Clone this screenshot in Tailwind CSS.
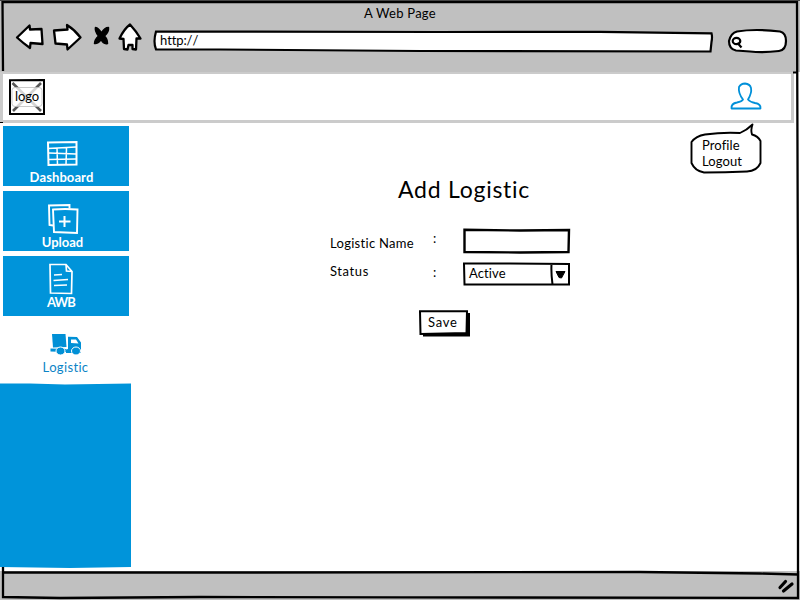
<!DOCTYPE html>
<html lang="en">
<head>
<meta charset="utf-8">
<title>A Web Page</title>
<script src="https://cdn.jsdelivr.net/npm/@tailwindcss/browser@4"></script>
</head>
<body class="bg-white">
<div class="relative flex h-[600px] w-[800px] flex-col overflow-hidden bg-white font-['Lato',sans-serif] text-[13px] leading-4 text-black">

  <!-- Browser chrome -->
  <header class="flex h-[72px] shrink-0 flex-col bg-[#c0c0c0]">
    <div class="flex h-[21px] items-end justify-center"><span class="tracking-[0.25px]">A Web Page</span></div>
    <div class="mt-px flex h-[34px] items-start pl-[14px]">
      <svg class="h-[32px] w-[130px] shrink-0" viewBox="14 22 130 32" fill="#fff" stroke="#000" stroke-width="2.300" stroke-linejoin="round">
        <path d="M17 37.500 L29.500 25.500 L30 29.500 L41.500 29 L42.500 44 L30.500 43 L30 48 Q23 43 17 37.500Z"/>
        <path d="M54 30.500 L67.500 29.500 L67 25 Q75 30 80.500 37.500 L67.500 49.500 L67 44.500 L55.500 43.500Z"/>
        <path d="M95.500 27.500 Q98.500 28 101.500 33 Q104.500 27.500 108.500 27.500 Q109 32 104.500 36 Q107.500 39 107.500 43.500 Q103.500 44.500 101 39.500 Q98 44 94.500 43.500 Q94.500 39.500 98.500 36 Q94.500 31 95.500 27.500Z" fill="#000" stroke-width="1.500"/>
        <path d="M130 24.500 Q136 31 140.500 38.500 L136.500 38.500 L136 49.500 L132.500 49 L132.500 45 L128.500 45 L127.500 49.500 L124 49 L123.500 39 L119.500 38.500 Q124 29 130 24.500Z"/>
      </svg>
      <div class="relative ml-[8px] mt-[7px] h-[25px] w-[564px] shrink-0">
        <svg class="absolute inset-0" width="564" height="25" viewBox="152 29 564 25" fill="#fff" stroke="#000" stroke-width="2.200"><path d="M156 31.500 L440 32 L600 31.800 L711.500 33.300 Q712.500 37 711.500 42 L710.500 51.500 L420 51 L220 49.500 L156 49.300 Q153 42 156 31.500Z"/></svg>
        <span class="relative ml-[8px] mt-[3px] block tracking-[-0.1px] [font-kerning:none]">http://</span>
      </div>
      <svg class="ml-[8px] mt-[5px] h-[27px] w-[66px] shrink-0" viewBox="724 27 66 27" fill="#fff" stroke="#000" stroke-width="2.200">
        <path d="M737 31.500 Q755 28.500 780 31.500 Q786 33 786 41 Q786 50 779 51 Q763 53 750 51.500 L736 50.500 Q729 49 729 41 Q731 33 737 31.500Z"/>
        <ellipse cx="736.500" cy="41" rx="3.800" ry="3.200"/><path d="M737.500 43 L741.500 47.500"/>
      </svg>
    </div>
  </header>

  <!-- Application bar -->
  <div class="mr-[6px] flex h-[51px] shrink-0 items-start justify-between border-b-[3px] border-l-[3px] border-r-[3px] border-t-2 border-[#cbcbcb] bg-white">
    <div class="relative ml-[6px] mt-[5px] flex h-[36px] w-[36px] items-center justify-center">
      <svg class="absolute inset-0" viewBox="9 79 36 36" width="36" height="36">
        <path d="M10 80.200 L44 80 L44 114 L10 114Z" fill="#fff" stroke="#000" stroke-width="2"/>
        <path d="M12.500 83 L41 111 M41 83 L13 111" stroke="#555" stroke-width="2.600"/>
        <rect x="12" y="87.500" width="30" height="19" rx="3" fill="#fff" fill-opacity=".75" stroke="#bbb" stroke-width=".8"/>
      </svg>
      <span class="relative -top-px tracking-[-0.1px]">logo</span>
    </div>
    <svg class="mr-[29px] mt-[8px] h-[29px] w-[32px]" viewBox="730 82 32 29" fill="none" stroke="#0090d9" stroke-width="1.800" stroke-linejoin="round"><path d="M731.500 108.500 Q731 103.500 737 102.500 Q742 101.500 743 99.500 Q738 93 739 87 Q741 83.500 745 83.500 Q750 84 751 88 Q752 93 748 99.500 Q750 102 755 103 Q761 104 760.500 108.500Z"/></svg>
  </div>

  <!-- Page body -->
  <div class="flex h-[448px] shrink-0">
    <nav class="flex w-[131px] shrink-0 flex-col text-center font-bold text-white">
      <a class="ml-[3px] mt-[3px] flex h-[60px] w-[126px] flex-col items-center bg-[#0094da]">
        <svg class="mr-[8px] mt-[14px] h-[28px] w-[32px] shrink-0" viewBox="46 140 32 28" fill="none" stroke="#fff" stroke-width="1.500"><path d="M48 142.500 L76.500 142 L76.500 164.500 L48.500 165Z" stroke-width="2"/><path d="M48 148.500 L76 147 M49 153 L76 154 M49 159.500 L76 159 M57 148 L57.500 165 M66.500 148 L66 165"/></svg>
        <span class="mr-[9px] mt-[1px] tracking-[0.1px]">Dashboard</span>
      </a>
      <a class="ml-[3px] mt-[5px] flex h-[60px] w-[126px] flex-col items-center bg-[#0094da]">
        <svg class="mr-[6px] mt-[12px] h-[32px] w-[32px] shrink-0" viewBox="47 203 32 32" fill="none" stroke="#fff" stroke-width="1.900"><path d="M69.500 208.500 L69.500 205 L49 205.500 L49.500 225 L53 225.500"/><path d="M53 209.500 Q65 208.500 77.500 209.500 L77 233 Q65 232.500 54 232Z"/><path d="M64.500 216 L64.500 227 M59 221.500 L70.500 221.500" stroke-width="2"/></svg>
        <span class="mr-[7px] -mt-px">Upload</span>
      </a>
      <a class="ml-[3px] mt-[5px] flex h-[60px] w-[126px] flex-col items-center bg-[#0094da]">
        <svg class="mr-[10px] mt-[6px] h-[33px] w-[26px] shrink-0" viewBox="48 262 26 33" fill="none" stroke="#fff" stroke-width="1.700"><path d="M50 264.500 L66 264.500 L72 271.500 L71.500 293.500 L50.500 293Z M66 264.500 L66.500 271 L72 271.500"/><path d="M54 275 L62 274.500 M53.500 280.500 L68 279.500 M54 285.500 L67 285"/></svg>
        <span class="mr-[10px] -mt-px tracking-[-0.9px]">AWB</span>
      </a>
      <a class="flex h-[67px] w-[131px] flex-col items-center bg-white font-normal text-[#0b84c6]">
        <svg class="mt-[16px] h-[24px] w-[34px] shrink-0" viewBox="49 332 34 24" fill="#0090d6"><path d="M52 334 L65.500 334 L66.500 347 L53 347.500Z"/><path fill-rule="evenodd" d="M68 336.800 L77 337 L81 342.500 L81 353 L66 353 L66 349.500 L68 349Z M71 339.500 L71 343 L78.500 343.500 L76 339.500Z"/><path d="M50.500 348.500 L66 349 L66 352 L50.500 351.500Z"/><g stroke="#fff" stroke-width="1"><ellipse cx="60.500" cy="351" rx="4.500" ry="4"/><ellipse cx="76" cy="351" rx="4.500" ry="4"/></g></svg>
        <span class="mt-[3px] tracking-[0.35px]">Logistic</span>
      </a>
      <svg class="h-[185px] w-[131px] shrink-0" viewBox="0 0 131 185" fill="#0094da"><path d="M0 .5 L30 .5 L65 1.500 L131 .5 L131 184 L70 185 L0 184Z"/></svg>
    </nav>

    <main class="flex grow flex-col pl-[199px]">
      <h1 class="ml-[68px] mt-[52px] text-[23px] leading-[28px] tracking-[0.75px]">Add Logistic</h1>
      <div class="mt-[24px] flex h-[27px]">
        <span class="mt-[8px] w-[103px] tracking-[0.3px]">Logistic Name</span>
        <span class="mt-[3px] w-[29px]">:</span>
        <svg width="110" height="27" viewBox="462 227 110 27" fill="#fff" stroke="#000" stroke-width="2.400"><path d="M464.500 229.800 L520 230.500 L569 230 L568.500 252 L520 252.500 L464.500 252Z"/></svg>
      </div>
      <div class="mt-[7px] flex h-[26px]">
        <span class="mt-[2px] w-[103px] tracking-[0.600px]">Status</span>
        <span class="mt-[3px] w-[29px]">:</span>
        <div class="relative h-[26px] w-[110px]">
          <svg class="absolute inset-0" width="110" height="26" viewBox="462 261 110 26" fill="#fff" stroke="#000" stroke-width="2"><path d="M464 263.500 L510 263.500 L569 264 L569 284.500 L464.500 284.500Z M551.500 264 Q551 273 552.500 284.500"/><path d="M556 271.500 L565 271.500 L561.500 278 L559 277.500Z" fill="#000" stroke-width="1"/></svg>
          <span class="relative ml-[7px] mt-[4px] block tracking-[0.1px]">Active</span>
        </div>
      </div>
      <div class="relative ml-[88px] mt-[22px] h-[30px] w-[54px]">
        <svg class="absolute inset-0" width="54" height="30" viewBox="418 309 54 30"><path d="M423 314 L470 313 L470 336.500 L423 336.500Z"/><path d="M420 311.300 L467 311.300 L466.500 333 L420.500 334Z" fill="#fff" stroke="#000" stroke-width="2"/></svg>
        <span class="relative ml-[10px] mt-[5px] block tracking-[0.700px]">Save</span>
      </div>
    </main>
  </div>

  <footer class="flex h-[29px] shrink-0 items-center justify-end bg-[#c0c0c0] pr-[5px]">
    <svg width="18" height="16" viewBox="777 579 18 16" stroke="#000" stroke-width="3.200" stroke-linecap="round"><path d="M785.500 582.500 L780 588.500 M792 585 L783.500 592"/></svg>
  </footer>

  <!-- Profile balloon -->
  <div class="absolute left-[688px] top-[121px] h-[54px] w-[76px]">
    <svg class="absolute inset-0" width="76" height="54" viewBox="688 121 76 54" fill="#fff" stroke="#000" stroke-width="1.900" stroke-linejoin="round"><path d="M705 134.500 Q723 132 740 133 Q747 130 752.500 124.500 Q750.500 130 752 134.500 Q758 136 760.500 141 L760.500 163 Q757 171 747 171.500 Q725 172.500 704 172.500 Q695 171 691.500 163 L691.500 142 Q696 136 705 134.500Z"/></svg>
    <div class="relative flex flex-col pl-[14px] pt-[16px] tracking-[0.1px]"><span>Profile</span><span>Logout</span></div>
  </div>

  <!-- Hand-drawn window frame -->
  <svg class="pointer-events-none absolute inset-0" width="800" height="600" fill="none" stroke="#000" stroke-width="2">
    <path d="M0 0H800V1H0Z" fill="#444" stroke="none"/>
    <path d="M3 71 L2.500 2.200 L797 2.200 L798 300 L798 598 L400 597.300 L200 597 L60 598 L3 597 L3 567" stroke-width="2.300"/>
    <path d="M3 572.500 L240 572.500 L640 572 L760 573.500 L798 574.500" stroke-width="2.400"/>
    <path d="M793 72.500 H798" stroke-width="2"/>
    <path d="M0 122.500 H3" stroke-width="1"/>
  </svg>
</div>
</body>
</html>
